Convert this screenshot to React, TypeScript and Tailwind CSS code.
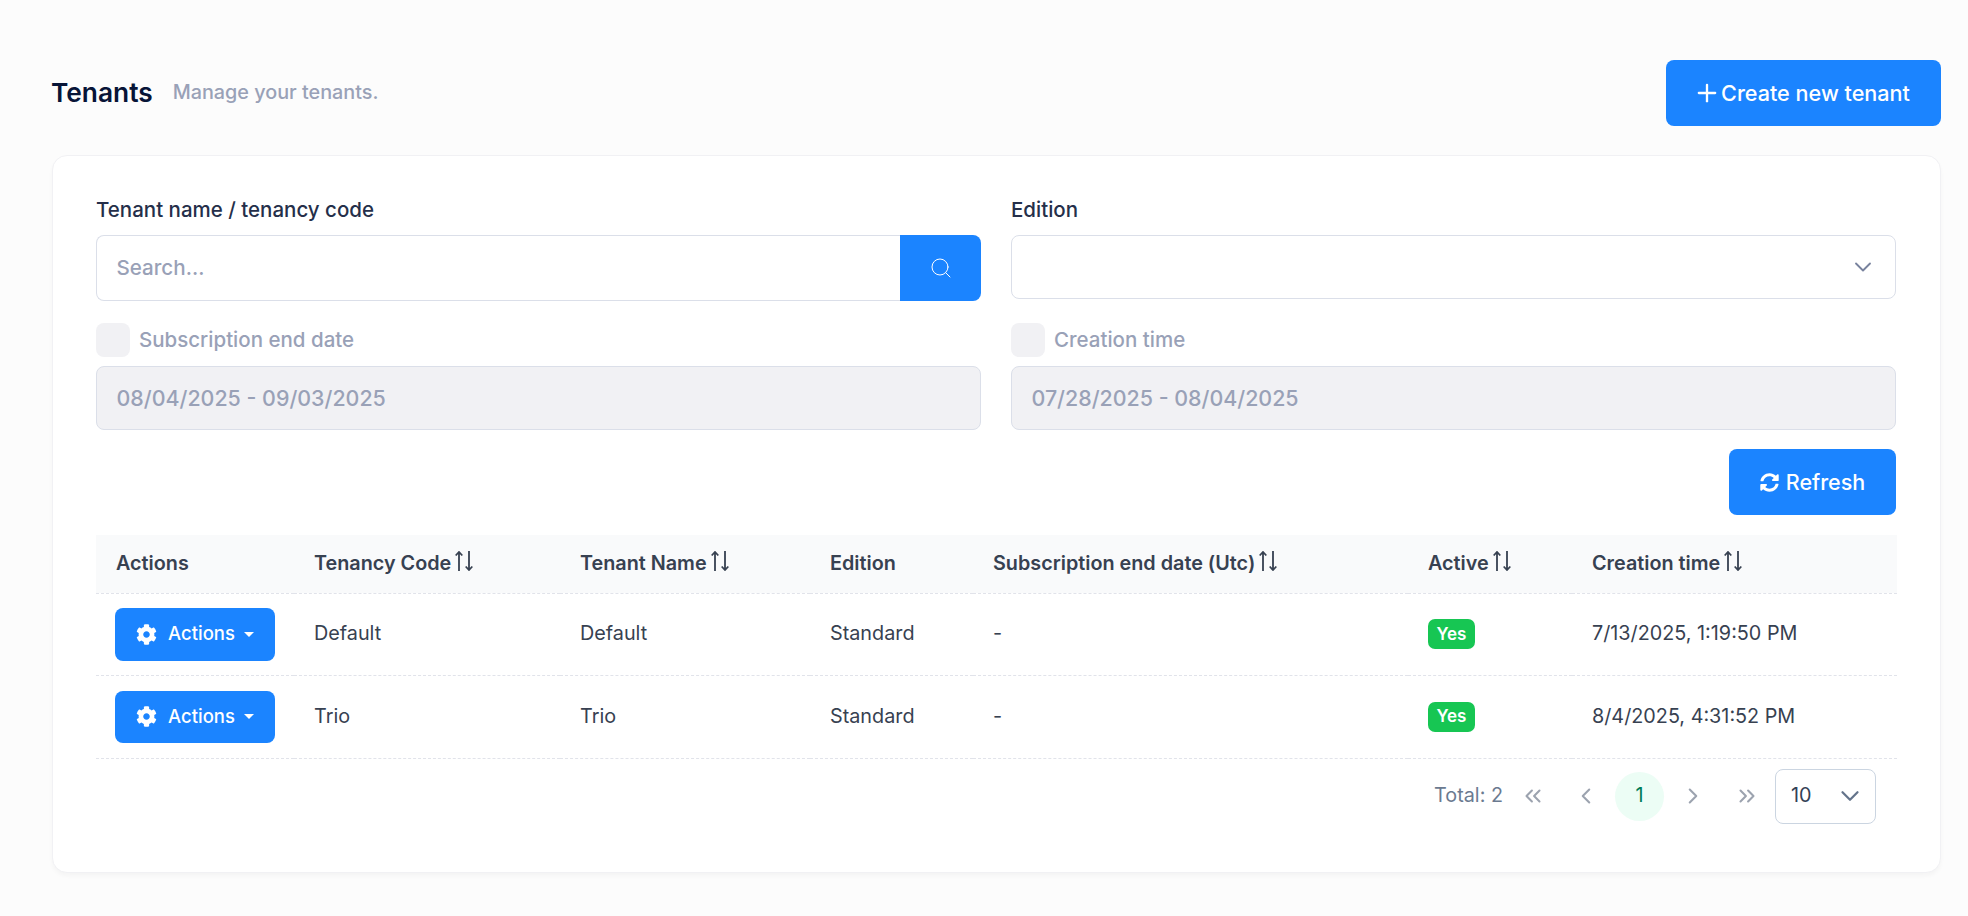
import React from 'react';
import { FaCog, FaSyncAlt } from 'react-icons/fa';
import { ChevronDown, ChevronLeft, ChevronRight, ChevronsLeft, ChevronsRight, Plus, Search } from 'lucide-react';

const SortIcon = () => (
  <svg viewBox="0 0 18 20" className="ml-[4px] mb-[8px] inline-block h-[20px] w-[18px] fill-none stroke-current stroke-[1.8]">
    <path d="M4 20V1M0.7 4.5L4 1l3.3 3.5" />
    <path d="M14 0v19M10.7 15.5L14 19l3.3-3.5" />
  </svg>
);

const columns = [
  { label: 'Actions', width: 'w-[198px]' },
  { label: 'Tenancy Code', width: 'w-[266px]', sort: true },
  { label: 'Tenant Name', width: 'w-[250px]', sort: true },
  { label: 'Edition', width: 'w-[163px]' },
  { label: 'Subscription end date (Utc)', width: 'w-[435px]', sort: true },
  { label: 'Active', width: 'w-[164px]', sort: true },
  { label: 'Creation time', width: 'w-[325px]', sort: true },
];

const rows = [
  { code: 'Default', name: 'Default', edition: 'Standard', end: '-', created: '7/13/2025, 1:19:50 PM', rowH: 'h-[82px]', btnH: 'h-[53px]' },
  { code: 'Trio', name: 'Trio', edition: 'Standard', end: '-', created: '8/4/2025, 4:31:52 PM', rowH: 'h-[83px]', btnH: 'h-[52px]' },
];

const DateFilter = ({ label, value }: { label: string; value: string }) => (
  <div>
    <div className="flex h-[34px] items-center gap-[9px]">
      <span className="h-[34px] w-[34px] rounded-[8px] bg-[#f1f1f4]" />
      <span className="text-[20.5px] font-medium text-[#99a1b7]">{label}</span>
    </div>
    <div className="mt-[9px] flex h-[64px] items-center rounded-[8px] border border-[#dbdfe9] bg-[#f1f1f4] px-[19.5px] text-[21.4px] font-medium text-[#99a1b7]">
      {value}
    </div>
  </div>
);

export default function App() {
  return (
    <main className="min-h-screen bg-[#fcfcfc] pl-[52px] pr-[27px] pt-[60px] pb-[43px] font-['Inter',sans-serif]">
      <div className="flex h-[66px] items-center justify-between">
        <div className="-ml-[1px] flex items-center gap-[20px]">
          <h1 className="text-[26.3px] leading-none font-semibold text-[#071437]">Tenants</h1>
          <p className="text-[19.8px] font-medium text-[#99a1b7]">Manage your tenants.</p>
        </div>
        <button className="flex h-[66px] w-[275px] items-center justify-center rounded-[8px] bg-[#1b84ff] pr-[4px] text-[21.6px] font-medium text-white">
          <Plus className="h-[28px] w-[28px]" strokeWidth={2} />
          Create new tenant
        </button>
      </div>

      <section className="mt-[29px] h-[718px] rounded-[15px] border border-[#f1f1f4] bg-white pl-[43px] pr-[44px] pt-[40px] shadow-[0_3px_4px_rgba(0,0,0,0.03)]">
        <div className="grid grid-cols-[885px_885px] gap-x-[30px]">
          <div>
            <label className="block text-[20.5px] leading-[28px] font-medium text-[#252f4a]">Tenant name / tenancy code</label>
            <div className="mt-[11px] flex h-[66px]">
              <div className="flex flex-1 items-center rounded-l-[8px] border border-r-0 border-[#dbdfe9] bg-white px-[19.5px] text-[20.6px] font-medium text-[#99a1b7]">
                Search...
              </div>
              <button className="flex w-[81px] items-center justify-center rounded-r-[8px] bg-[#1b84ff] text-white">
                <Search className="h-[24px] w-[24px]" strokeWidth={1} />
              </button>
            </div>
          </div>
          <div>
            <label className="block text-[20.5px] leading-[28px] font-medium text-[#252f4a]">Edition</label>
            <div className="mt-[11px] flex h-[64px] items-center justify-end rounded-[8px] border border-[#dbdfe9] bg-white pr-[18px]">
              <ChevronDown className="h-[28px] w-[28px] text-[#78829d]" strokeWidth={1.6} />
            </div>
          </div>
        </div>

        <div className="mt-[22px] grid grid-cols-[885px_885px] gap-x-[30px]">
          <DateFilter label="Subscription end date" value="08/04/2025 - 09/03/2025" />
          <DateFilter label="Creation time" value="07/28/2025 - 08/04/2025" />
        </div>

        <div className="mt-[19px] flex justify-end">
          <button className="flex h-[66px] w-[167px] items-center justify-center gap-[7px] rounded-[8px] bg-[#1b84ff] text-[21.5px] font-medium text-white">
            <FaSyncAlt className="h-[19px] w-[19px]" />
            Refresh
          </button>
        </div>

        <table className="mt-[20px] w-full table-fixed border-collapse text-[19.8px] text-[#374151]">
          <thead>
            <tr className="h-[58px] border-b border-dashed border-[#e1e3ea] bg-[#f9fafb]">
              {columns.map((col) => (
                <th key={col.label} className={`${col.width} px-[20px] text-left text-[19.8px] font-semibold text-[#374151]`}>
                  {col.label}
                  {col.sort && <SortIcon />}
                </th>
              ))}
            </tr>
          </thead>
          <tbody>
            {rows.map((row) => (
              <tr key={row.code} className={`${row.rowH} border-b border-dashed border-[#e1e3ea]`}>
                <td className="px-[20px]">
                  <button className={`${row.btnH} -ml-[1px] flex w-[160px] items-center justify-center rounded-[8px] bg-[#1b84ff] text-[18.5px] font-medium text-white`}>
                    <FaCog className="h-[21px] w-[21px]" />
                    <span className="ml-[11px]">Actions</span>
                    <span className="ml-[9px] h-0 w-0 border-x-[5.5px] border-t-[5px] border-x-transparent border-t-white" />
                  </button>
                </td>
                <td className="px-[20px]">{row.code}</td>
                <td className="px-[20px]">{row.name}</td>
                <td className="px-[20px]">{row.edition}</td>
                <td className="px-[20px]">{row.end}</td>
                <td className="px-[20px]">
                  <span className="inline-flex h-[30px] w-[47px] items-center justify-center rounded-[7px] bg-[#17c653] text-[17px] font-semibold text-white">Yes</span>
                </td>
                <td className="px-[20px]">{row.created}</td>
              </tr>
            ))}
          </tbody>
        </table>

        <div className="mt-[10px] flex h-[55px] items-center justify-end pr-[20px] text-[19.8px]">
          <span className="mr-[5px] text-[#6b7a90]">Total: 2</span>
          <div className="flex items-center text-[#9ca3af]">
            <span className="flex h-[49px] w-[49px] items-center justify-center"><ChevronsLeft className="h-[26px] w-[26px]" strokeWidth={1.9} /></span>
            <span className="ml-[4.5px] flex h-[49px] w-[49px] items-center justify-center"><ChevronLeft className="h-[26px] w-[26px]" strokeWidth={1.9} /></span>
            <span className="ml-[4.5px] flex h-[49px] w-[49px] items-center justify-center rounded-full bg-emerald-50 text-emerald-700">1</span>
            <span className="ml-[4.5px] flex h-[49px] w-[49px] items-center justify-center"><ChevronRight className="h-[26px] w-[26px]" strokeWidth={1.9} /></span>
            <span className="ml-[4.5px] flex h-[49px] w-[49px] items-center justify-center"><ChevronsRight className="h-[26px] w-[26px]" strokeWidth={1.9} /></span>
          </div>
          <div className="ml-[4px] flex h-[55px] w-[101px] items-center justify-between rounded-[8px] border border-[#cbd5e1] pl-[15px] pr-[10px] text-[#334155]">
            <span>10</span>
            <ChevronDown className="h-[30px] w-[30px] text-[#64748b]" strokeWidth={1.8} />
          </div>
        </div>
      </section>
    </main>
  );
}
